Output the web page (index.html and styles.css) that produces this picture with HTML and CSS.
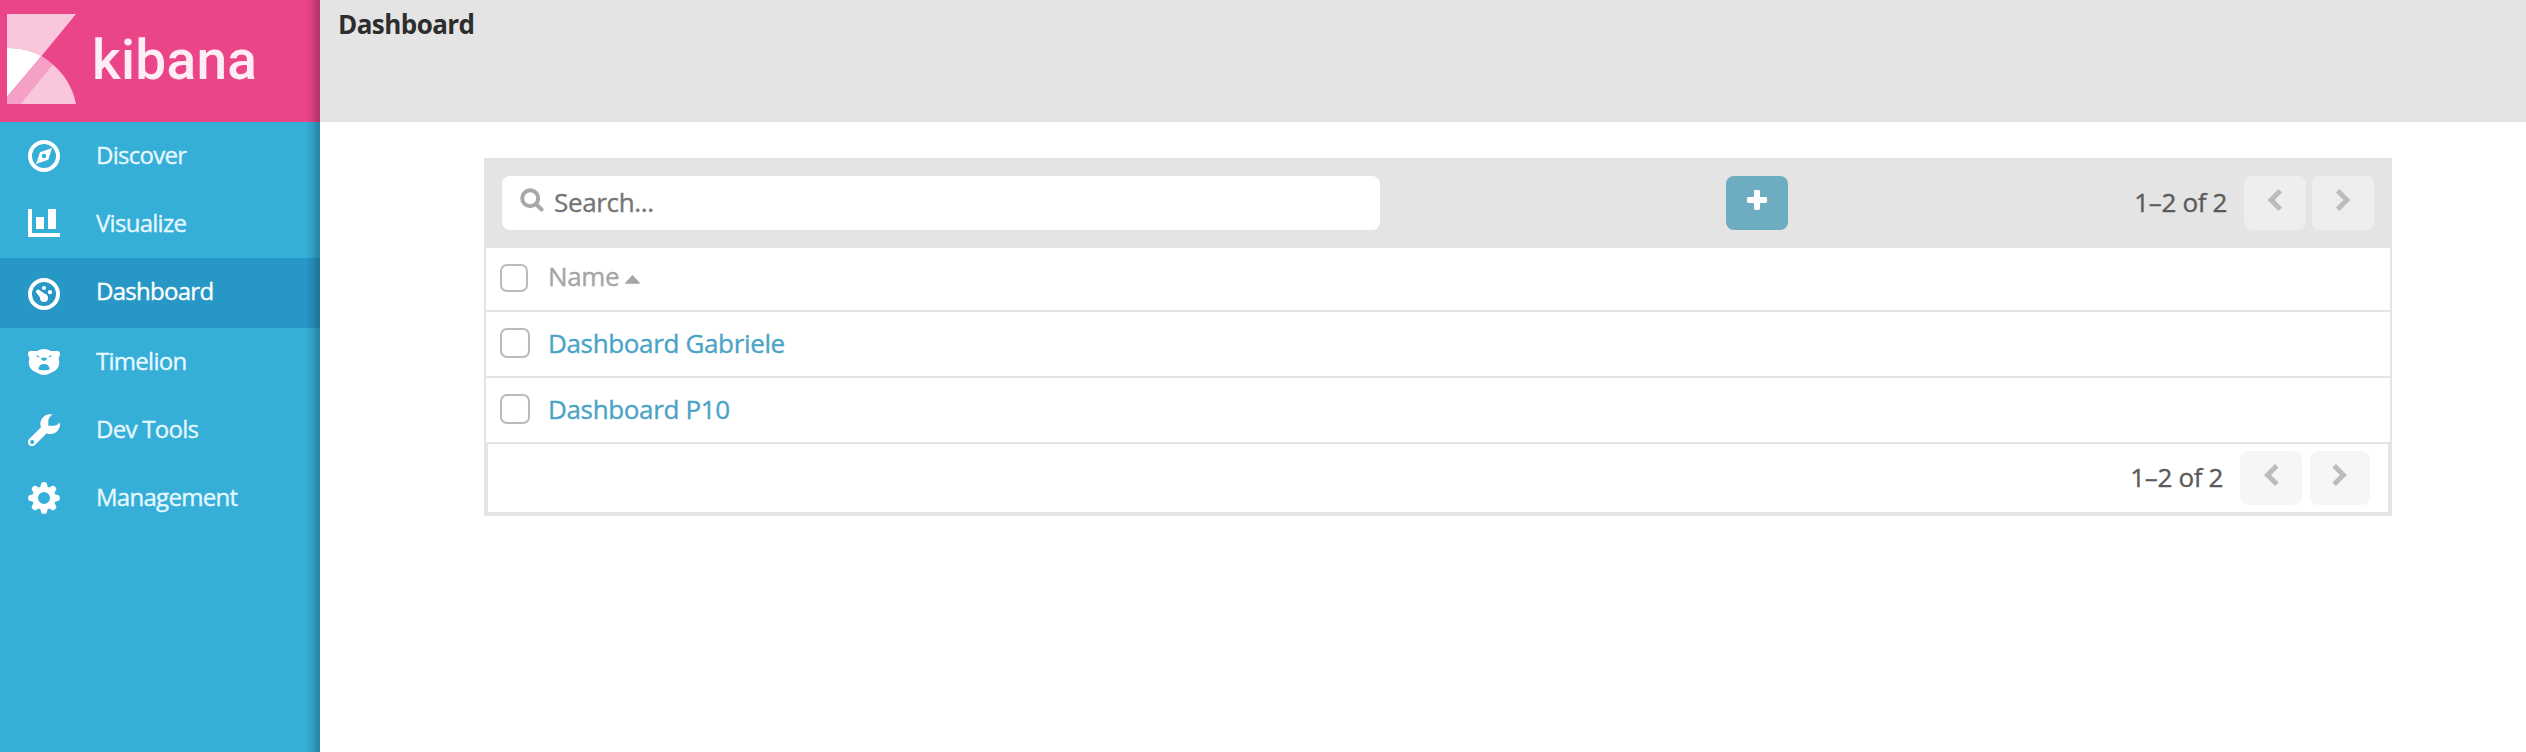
FILE: index.html
```html
<!DOCTYPE html>
<html lang="en">
<head>
<meta charset="utf-8">
<title>Kibana</title>
<link rel="stylesheet" href="styles.css">
</head>
<body>
<div class="app">
  <aside class="sidebar">
    <div class="brand">
      <svg class="brand-mark" viewBox="0 0 69 90">
        <path fill="#f9c6dc" d="M0 0H69L34.5 42A70 70 0 0 0 0 34Z"/>
        <path fill="#fff" d="M0 34A70 70 0 0 1 34.5 42L0 83Z"/>
        <path fill="#f5a0c6" d="M34.5 42A70 70 0 0 1 45.5 50.2L13.2 90H0V83Z"/>
        <path fill="#f9c6dc" d="M45.5 50.2A70 70 0 0 1 69 90H13.2Z"/>
      </svg>
      <span class="brand-name">kibana</span>
    </div>
    <nav class="nav">
      <a class="nav-item">
        <svg class="nav-icon" viewBox="0 0 32 32"><circle cx="16" cy="16" r="14" fill="none" stroke="#fff" stroke-width="4"/><path fill="#fff" fill-rule="evenodd" d="M24 8L20.3 19.8L8 24L12 12.2ZM16 13.8a2.2 2.2 0 1 0 0 4.4a2.2 2.2 0 1 0 0-4.4Z"/></svg>
        <span class="nav-label">Discover</span>
      </a>
      <a class="nav-item">
        <svg class="nav-icon" viewBox="0 0 32 32"><path fill="#fff" d="M0 1H4V25H32V29H0ZM8 9H16V21H8ZM20 1H28V21H20Z"/></svg>
        <span class="nav-label">Visualize</span>
      </a>
      <a class="nav-item active">
        <svg class="nav-icon" viewBox="0 0 32 32"><circle cx="16" cy="16" r="14" fill="none" stroke="#fff" stroke-width="4"/><g fill="#fff"><circle cx="16" cy="10" r="2.1"/><circle cx="22" cy="14.2" r="2.1"/><circle cx="16" cy="20" r="4"/><path d="M8.6 15a2 2 0 0 1 3-2.8L18.5 17L14 22Z"/></g></svg>
        <span class="nav-label">Dashboard</span>
      </a>
      <a class="nav-item">
        <svg class="nav-icon" viewBox="0 0 32 32"><path fill="#fff" d="M2 5H9Q16 1 23 5H30Q32 5 32 7.500Q32 10 30.600 12Q32 16 30.700 20Q29 24.500 23 26.800Q19 29 16 29Q13 29 9 26.800Q3 24.500 1.300 20Q0 16 1.400 12Q0 10 0 7.500Q0 5 2 5Z"/><g fill="#35aed8"><path d="M7.800 9.300L11.500 10.300L11 11.300Q9 11.500 7.800 9.300ZM24.200 9.300L20.500 10.300L21 11.300Q23 11.500 24.200 9.300Z"/><path d="M12.800 12.300Q16 10.900 19.200 12.300Q18.500 15 16 15Q13.500 15 12.800 12.300Z"/><path d="M10.300 23.200Q11 18 16 18Q21 18 21.700 23.200Q20.500 24.500 16 24.300Q11.500 24.500 10.300 23.200Z"/></g></svg>
        <span class="nav-label">Timelion</span>
      </a>
      <a class="nav-item">
        <svg class="nav-icon" viewBox="0 0 32 32"><path fill="#fff" fill-rule="evenodd" d="M24.500 0.500Q20.300 3.500 20.300 7V11.700H25Q29.500 11.700 31.300 8.400Q32.800 11 31 14.500Q28.500 19.700 22.800 20Q20.500 20.300 18.700 19.200L7 31A4.150 4.150 0 0 1 1.200 25L13 13.300Q11.300 8.500 14 4.500Q18 -0.800 24.500 0.500ZM4.200 26a2 2 0 1 0 0 4a2 2 0 1 0 0-4Z"/></svg>
        <span class="nav-label">Dev Tools</span>
      </a>
      <a class="nav-item">
        <svg class="nav-icon" viewBox="0 0 32 32"><g fill="#fff"><g id="teeth"><path id="tooth" d="M12 5.500L13.500 .8Q16 -.6 18.500 .8L20 5.500Z"/><use href="#tooth" transform="rotate(45 16 16)"/><use href="#tooth" transform="rotate(90 16 16)"/><use href="#tooth" transform="rotate(135 16 16)"/></g><use href="#teeth" transform="rotate(180 16 16)"/></g><circle cx="16" cy="16" r="8.800" fill="none" stroke="#fff" stroke-width="5.600"/></svg>
        <span class="nav-label">Management</span>
      </a>
    </nav>
  </aside>
  <div class="main">
    <header class="topbar"><h1 class="title">Dashboard</h1></header>
    <section class="panel">
      <div class="toolbar">
        <div class="search">
          <svg class="search-icon" viewBox="0 0 24 24"><circle cx="10.200" cy="10.200" r="8" fill="none" stroke="#a8a8a8" stroke-width="4"/><path d="M16 16L21.500 21.500" stroke="#a8a8a8" stroke-width="4" stroke-linecap="round"/></svg>
          <span class="search-text">Search...</span>
        </div>
        <div class="add"><svg class="plus" viewBox="0 0 20 20"><path fill="#fff" d="M8.400 0H11.600Q13 0 13 1.400V7H18.600Q20 7 20 8.400V11.600Q20 13 18.600 13H13V18.600Q13 20 11.600 20H8.400Q7 20 7 18.600V13H1.400Q0 13 0 11.600V8.400Q0 7 1.400 7H7V1.400Q7 0 8.400 0Z"/></svg></div>
        <div class="pager">
          <span class="count">1–2 of 2</span>
          <span class="page-btn"><svg class="chevron" viewBox="0 0 16 24"><path d="M13.300 2.800L4.100 12L13.300 21.200"/></svg></span>
          <span class="page-btn"><svg class="chevron" viewBox="0 0 16 24"><path d="M2.700 2.800L11.900 12L2.700 21.200"/></svg></span>
        </div>
      </div>
      <div class="row head">
        <span class="check"></span><span class="cell">Name</span>
        <svg class="caret" viewBox="0 0 15 9"><path fill="#a5a5a5" d="M7.500 0L15 8Q15 8.700 14.200 8.700H.8Q0 8.700 0 8Z"/></svg>
      </div>
      <div class="row"><span class="check"></span><a class="cell link">Dashboard Gabriele</a></div>
      <div class="row"><span class="check"></span><a class="cell link">Dashboard P10</a></div>
      <div class="footer">
        <div class="pager">
          <span class="count">1–2 of 2</span>
          <span class="page-btn"><svg class="chevron" viewBox="0 0 16 24"><path d="M13.800 2.800L4.600 12L13.800 21.200"/></svg></span>
          <span class="page-btn last"><svg class="chevron" viewBox="0 0 16 24"><path d="M2.200 2.800L11.400 12L2.200 21.200"/></svg></span>
        </div>
      </div>
    </section>
  </div>
</div>
</body>
</html>
```
FILE: styles.css
```css
* { box-sizing: border-box; }
body { margin: 0; background: #fff; font-family: "Open Sans", "Noto Sans", sans-serif; font-size: 26px; letter-spacing: -.35px; -webkit-text-stroke: .35px currentColor; color: #5a5a5a; }
svg { display: block; flex: none; }
.app { display: flex; height: 752px; overflow: hidden; }

.sidebar { position: relative; width: 320px; flex: none; background: #35aed8; }
.sidebar::after { content: ""; position: absolute; top: 0; right: 0; bottom: 0; width: 14px; background: linear-gradient(to right, rgba(0,0,0,0), rgba(0,0,0,.09) 45%, rgba(0,0,0,.21) 80%, rgba(0,0,0,.23)); }
.brand { display: flex; height: 122px; padding: 14px 0 0 7px; background: #eb4589; }
.brand-mark { width: 69px; height: 90px; }
.brand-name { margin-left: 16px; padding-top: 14px; font: 500 55px/64px Roboto, sans-serif; letter-spacing: .3px; -webkit-text-stroke: 0; color: #ffedf5; }
.nav-item { display: flex; align-items: center; height: 68px; padding-left: 28px; color: #e6f8ff; }
.nav-item.active { height: 70px; padding-top: 2px; background: #2797c5; color: #fff; }
.nav-icon { width: 32px; height: 32px; }
.nav-label { margin-left: 36px; padding-bottom: 3px; font-size: 24px; line-height: 32px; letter-spacing: -.72px; }
.active .nav-label { padding-bottom: 6px; }

.main { flex: 1; }
.topbar { height: 122px; padding: 6px 0 0 18px; background: #e4e4e4; }
.title { margin: 0; font-size: 26px; line-height: 36px; font-weight: 700; letter-spacing: -.55px; -webkit-text-stroke: 0; color: #2d2d2d; }

.panel { width: 1908px; margin: 36px 0 0 164px; border: solid #e4e4e4; border-width: 0 2px 2px; }
.toolbar { display: flex; align-items: center; height: 90px; padding: 0 16px; background: #e4e4e4; }
.search { display: flex; width: 878px; height: 54px; padding: 12px 0 0 18px; border-radius: 8px; background: #fff; }
.search-icon { width: 24px; height: 24px; }
.search-text { margin: -4px 0 0 10px; line-height: 36px; color: #757575; }
.add { display: flex; justify-content: center; width: 62px; height: 54px; margin-left: 346px; padding-top: 14px; border-radius: 8px; background: #6eadc1; }
.plus { width: 20px; height: 20px; }
.pager { display: flex; align-items: center; margin-left: auto; }
.count { padding-bottom: 3px; margin-right: 17px; line-height: 36px; }
.page-btn { display: flex; justify-content: center; width: 62px; height: 54px; padding-top: 12px; border-radius: 8px; background: #eee; }
.page-btn + .page-btn { margin-left: 6px; }
.chevron { width: 16px; height: 24px; fill: none; stroke: #bcbcbc; stroke-width: 5; }

.row { display: flex; align-items: center; height: 66px; padding-left: 14px; border-bottom: 2px solid #e4e4e4; }
.head { height: 64px; color: #a5a5a5; }
.check { width: 30px; height: 30px; margin-top: -2px; border: 2px solid #bababa; border-radius: 7px; }
.cell { margin-left: 18px; padding-bottom: 3px; line-height: 36px; }
.head .check { width: 28px; height: 28px; }
.head .cell { margin-left: 20px; padding-bottom: 6px; }
.link { color: #4aa3c7; }
.caret { width: 15px; height: 9px; margin-left: 6px; }
.footer { display: flex; height: 70px; border: solid #e4e4e4; border-width: 0 2px 2px; padding-right: 18px; }
.footer .page-btn { background: #f6f6f6; }
.footer .page-btn.last { width: 60px; margin-left: 8px; }
```
